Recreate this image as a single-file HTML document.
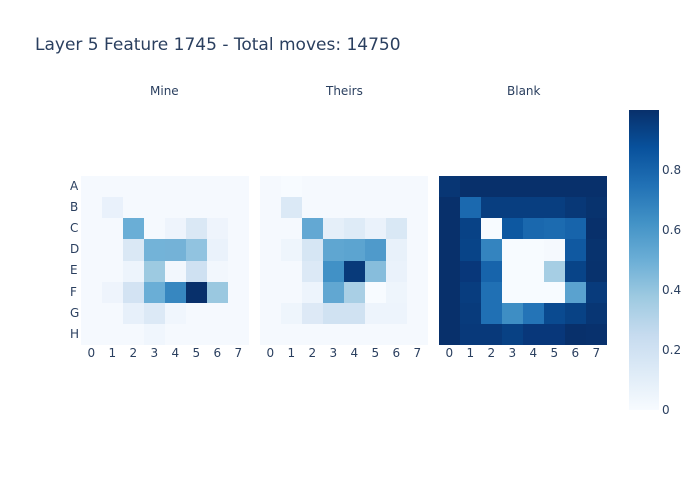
<!DOCTYPE html>
<html><head><meta charset="utf-8"><style>
body{margin:0;width:700px;height:500px;background:#fff;position:relative;overflow:hidden;font-family:"DejaVu Sans","Liberation Sans",sans-serif;color:#2a3f5f}
.t{position:absolute;white-space:nowrap}
.g{position:absolute;top:176px;width:168px;height:169px;display:grid;grid-template-columns:repeat(8,1fr);grid-template-rows:repeat(8,1fr)}
.lab{font-size:12px}
</style></head><body>
<div class="t" style="left:35px;top:35px;font-size:17px">Layer 5 Feature 1745 - Total moves: 14750</div>
<div class="t lab" style="left:150px;top:84px">Mine</div>
<div class="t lab" style="left:326px;top:84px">Theirs</div>
<div class="t lab" style="left:507px;top:84px">Blank</div>
<div id="g0" class="g" style="left:81px"></div>
<div id="g1" class="g" style="left:260px"></div>
<div id="g2" class="g" style="left:439px"></div>
<div class="t lab" style="left:70px;top:179px">A</div>
<div class="t lab" style="left:70px;top:200px">B</div>
<div class="t lab" style="left:70px;top:221px">C</div>
<div class="t lab" style="left:70px;top:242px">D</div>
<div class="t lab" style="left:70px;top:263px">E</div>
<div class="t lab" style="left:70px;top:285px">F</div>
<div class="t lab" style="left:70px;top:306px">G</div>
<div class="t lab" style="left:70px;top:327px">H</div>
<div id="xl"></div>
<div style="position:absolute;left:629px;top:110px;width:30px;height:300px;background:linear-gradient(to top,#f7fbff 0%,#deebf7 12.5%,#c6dbef 25%,#9ecae1 37.5%,#6baed6 50%,#4292c6 62.5%,#2171b5 75%,#08519c 87.5%,#08306b 100%)"></div>
<div class="t lab" style="left:662px;top:163px">0.8</div>
<div class="t lab" style="left:662px;top:223px">0.6</div>
<div class="t lab" style="left:662px;top:283px">0.4</div>
<div class="t lab" style="left:662px;top:343px">0.2</div>
<div class="t lab" style="left:662px;top:403px">0</div>
<script>
var L='#f5f9fe',W='#f7fbff',D='#08306b';
var m=[
[L,L,L,L,L,L,L,L],
[L,'#e9f1fb',L,L,L,L,L,L],
[L,L,'#6aaed6',L,'#eef4fc','#dae8f5','#eef4fc',L],
[L,L,'#dae8f5','#73b3d8','#74b2d7','#91c3e0','#eaf2fb',L],
[L,L,'#edf4fc','#9dcae1','#f2f7fd','#cfe1f2','#f2f7fd',L],
[L,'#eef4fc','#d3e3f3','#6aaed6','#3787c0','#08306b','#9ac8e0',L],
[L,L,'#e7f0fa','#dce9f6','#f0f6fd',L,L,L],
[L,L,L,'#f0f6fd',L,L,L,L]];
var t=[
[L,W,L,L,L,L,L,L],
[L,'#dbe9f6',L,L,L,L,L,L],
[L,L,'#63a8d3','#e5eff9','#deebf7','#eaf2fb','#d9e8f5',L],
[L,'#eef5fc','#d6e6f4','#5fa6d1','#5ca4d0','#4f9acb','#e8f1fa',L],
[L,L,'#dce9f6','#4191c6','#083a7a','#87bddc','#eaf2fb',L],
[L,L,'#edf4fc','#61a7d2','#a9cfe5',W,'#eef5fc',L],
[L,'#eef5fc','#dde9f6','#d0e2f2','#d0e2f2','#edf4fc','#edf4fc',L],
[L,L,L,L,L,L,L,L]];
var b=[
['#083674',D,D,D,D,D,D,D],
[D,'#1b69af','#083e80','#083e80','#083e80','#083e80','#083877','#08336e'],
[D,'#084286',W,'#0d58a1','#1a68ae','#1c6bb0','#1764ab',D],
[D,'#084488','#3484bf',W,W,'#f5f9fe','#1059a1','#08336e'],
[D,'#08377a','#1764ab',W,W,'#a6cee4','#084488','#08326d'],
[D,'#083d7f','#2070b4',W,W,W,'#5aa2cf','#083b7c'],
[D,'#083b7c','#2070b4','#3e8ec4','#2474b7','#0a4a90','#084285','#083674'],
[D,'#08397a','#08397a','#084184','#08377a','#08377a',D,'#08316d']];
[m,t,b].forEach(function(a,i){var g=document.getElementById('g'+i);a.forEach(function(r){r.forEach(function(c){var d=document.createElement('div');d.style.background=c;g.appendChild(d);});});});
var xl=document.getElementById('xl');
[81,260,439].forEach(function(x0){for(var k=0;k<8;k++){var s=document.createElement('div');s.className='t lab';s.style.left=(x0+10.5+k*21-4)+'px';s.style.top='346px';s.textContent=k;xl.appendChild(s);}});
</script>
</body></html>
